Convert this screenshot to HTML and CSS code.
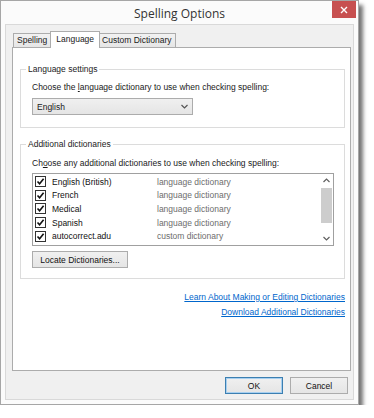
FILE: index.html
```html
<!DOCTYPE html>
<html lang="en">
<head>
    <meta charset="UTF-8">
    <meta name="viewport" content="width=device-width, initial-scale=1.0">
    <title>Spelling Options</title>
    <link rel="stylesheet" href="styles.css">
</head>
<body>
    <div class="window">
        <div class="titlebar">
            <span class="title">Spelling Options</span>
            <span class="close">
                <svg width="8" height="8" viewBox="0 0 8 8"><path d="M1 1 L7 7 M7 1 L1 7" stroke="#fff" stroke-width="1.4" fill="none"/></svg>
            </span>
        </div>
        <div class="client">
            <div class="tabs">
                <span class="tab">Spelling</span>
                <span class="tab active">Language</span>
                <span class="tab">Custom Dictionary</span>
            </div>
            <div class="panel">
                <fieldset class="group">
                    <legend>Language settings</legend>
                    <div class="group-body">
                        <p class="hint">Choose the <u>l</u>anguage dictionary to use when checking spelling:</p>
                        <div class="combo">
                            <span>English</span>
                            <svg width="7" height="5" viewBox="0 0 7 5"><path d="M0.5 1 L3.5 4 L6.5 1" stroke="#555" stroke-width="1.2" fill="none"/></svg>
                        </div>
                    </div>
                </fieldset>

                <fieldset class="group second">
                    <legend>Additional dictionaries</legend>
                    <div class="group-body tight">
                        <p class="hint">Ch<u>o</u>ose any additional dictionaries to use when checking spelling:</p>
                        <div class="listbox">
                            <div class="rows">
                                <div class="row">
                                    <svg class="check" width="11" height="11" viewBox="0 0 11 11"><rect x="0.5" y="0.5" width="10" height="10" fill="#fff" stroke="#333"/><path d="M2.5 5.5 L4.6 7.8 L8.6 2.8" stroke="#111" stroke-width="1.6" fill="none"/></svg>
                                    <span class="name">English (British)</span><span class="kind">language dictionary</span>
                                </div>
                                <div class="row">
                                    <svg class="check" width="11" height="11" viewBox="0 0 11 11"><rect x="0.5" y="0.5" width="10" height="10" fill="#fff" stroke="#333"/><path d="M2.5 5.5 L4.6 7.8 L8.6 2.8" stroke="#111" stroke-width="1.6" fill="none"/></svg>
                                    <span class="name">French</span><span class="kind">language dictionary</span>
                                </div>
                                <div class="row">
                                    <svg class="check" width="11" height="11" viewBox="0 0 11 11"><rect x="0.5" y="0.5" width="10" height="10" fill="#fff" stroke="#333"/><path d="M2.5 5.5 L4.6 7.8 L8.6 2.8" stroke="#111" stroke-width="1.6" fill="none"/></svg>
                                    <span class="name">Medical</span><span class="kind">language dictionary</span>
                                </div>
                                <div class="row">
                                    <svg class="check" width="11" height="11" viewBox="0 0 11 11"><rect x="0.5" y="0.5" width="10" height="10" fill="#fff" stroke="#333"/><path d="M2.5 5.5 L4.6 7.8 L8.6 2.8" stroke="#111" stroke-width="1.6" fill="none"/></svg>
                                    <span class="name">Spanish</span><span class="kind">language dictionary</span>
                                </div>
                                <div class="row">
                                    <svg class="check" width="11" height="11" viewBox="0 0 11 11"><rect x="0.5" y="0.5" width="10" height="10" fill="#fff" stroke="#333"/><path d="M2.5 5.5 L4.6 7.8 L8.6 2.8" stroke="#111" stroke-width="1.6" fill="none"/></svg>
                                    <span class="name">autocorrect.adu</span><span class="kind">custom dictionary</span>
                                </div>
                            </div>
                            <div class="scrollbar">
                                <span class="arrow">
                                    <svg width="7" height="5" viewBox="0 0 7 5"><path d="M0.5 4 L3.5 1 L6.5 4" stroke="#606060" stroke-width="1.2" fill="none"/></svg>
                                </span>
                                <span class="track"><span class="thumb"></span></span>
                                <span class="arrow">
                                    <svg width="7" height="5" viewBox="0 0 7 5"><path d="M0.5 1 L3.5 4 L6.5 1" stroke="#606060" stroke-width="1.2" fill="none"/></svg>
                                </span>
                            </div>
                        </div>
                        <button class="btn locate">Locate Dictionaries...</button>
                    </div>
                </fieldset>

                <div class="links">
                    <a href="#">Learn About Making or Editing Dictionaries</a>
                    <a href="#">Download Additional Dictionaries</a>
                </div>
            </div>
            <div class="actions">
                <button class="btn default">OK</button>
                <button class="btn">Cancel</button>
            </div>
        </div>
    </div>
</body>
</html>
```

FILE: styles.css
```css
body {
    margin: 0;
    background: #fff;
    font-family: "Liberation Sans", Arial, sans-serif;
    font-size: 8.5px;
    color: #1a1a1a;
}
.window {
    width: 349px;
    padding: 0 4px 4px 4px;
    background: #fbfbfb;
    border: 1px solid #a6a6a6;
    box-shadow: 4px 5px 4px rgba(0, 0, 0, 0.55);
}
.titlebar {
    position: relative;
    height: 23px;
    display: flex;
    align-items: center;
    justify-content: center;
}
.title {
    font-family: "Open Sans", sans-serif;
    font-size: 12px;
    color: #333;
    margin-top: 2px;
}
.close {
    position: absolute;
    top: 0;
    right: -2px;
    width: 24px;
    height: 17px;
    background: #c75050;
    display: flex;
    align-items: center;
    justify-content: center;
}
.client {
    background: #f0f0f0;
    border: 1px solid #d9d9d9;
    padding: 6px 2px 5px 6px;
}
.tabs {
    display: flex;
    align-items: flex-end;
    height: 16px;
    padding-left: 1px;
}
.tab {
    height: 13px;
    line-height: 13px;
    padding: 0 3px;
    border: 1px solid #acacac;
    border-bottom: none;
    background: linear-gradient(#f2f2f2, #e6e6e6);
}
.tab + .tab {
    margin-left: -1px;
}
.tab.active {
    position: relative;
    height: 16px;
    line-height: 14px;
    padding: 0 5px;
    margin: 0 -1px -1px -1px;
    background: #fff;
}
.panel {
    height: 322px;
    padding: 0 5px 0 7px;
    background: #fff;
    border: 1px solid #acacac;
}
.group {
    margin: 16px 0 0 0;
    padding: 0;
    border: 1px solid #dcdcdc;
    min-width: 0;
}
.group.second {
    margin-top: 11px;
}
.group legend {
    margin-left: 5px;
    padding: 0 2px;
    line-height: 11px;
    color: #222;
}
.group-body {
    padding: 7px 10px 12px 11px;
}
.group-body.tight {
    padding-top: 8px;
    padding-bottom: 10px;
}
.hint {
    margin: 0;
    line-height: 11px;
}
.combo {
    margin-top: 5px;
    width: 151px;
    height: 15px;
    padding: 0 4px;
    border: 1px solid #acacac;
    background: linear-gradient(#f0f0f0, #e5e5e5);
    display: flex;
    align-items: center;
    justify-content: space-between;
}
.listbox {
    margin-top: 4px;
    height: 71px;
    border: 1px solid #a0a0a0;
    background: #fff;
    display: flex;
}
.rows {
    flex: 1;
    padding: 1px 0 0 2px;
}
.row {
    height: 13.6px;
    display: grid;
    grid-template-columns: 17px 105px 1fr;
    align-items: center;
}
.check {
    display: block;
}
.name {
    color: #111;
}
.kind {
    color: #6d6d6d;
}
.scrollbar {
    width: 13px;
    display: flex;
    flex-direction: column;
    background: #fff;
}
.arrow {
    height: 13px;
    display: flex;
    align-items: center;
    justify-content: center;
}
.track {
    flex: 1;
    padding: 1px 1px;
}
.thumb {
    display: block;
    height: 35px;
    background: #cdcdcd;
}
.btn {
    font-family: inherit;
    font-size: inherit;
    color: #111;
    height: 17px;
    padding: 0;
    border: 1px solid #acacac;
    background: linear-gradient(#f0f0f0, #e5e5e5);
}
.locate {
    display: block;
    margin-top: 5px;
    width: 96px;
}
.links {
    margin-top: 11px;
    padding-right: 0;
    display: flex;
    flex-direction: column;
    align-items: flex-end;
    line-height: 15px;
}
.links a {
    color: #0066cc;
}
.actions {
    margin-top: 6px;
    padding-right: 3px;
    display: flex;
    justify-content: flex-end;
    gap: 7px;
}
.actions .btn {
    width: 58px;
}
.btn.default {
    border-color: #3c7fb1;
    box-shadow: inset 0 0 0 1px #a8d0f0;
}
```
